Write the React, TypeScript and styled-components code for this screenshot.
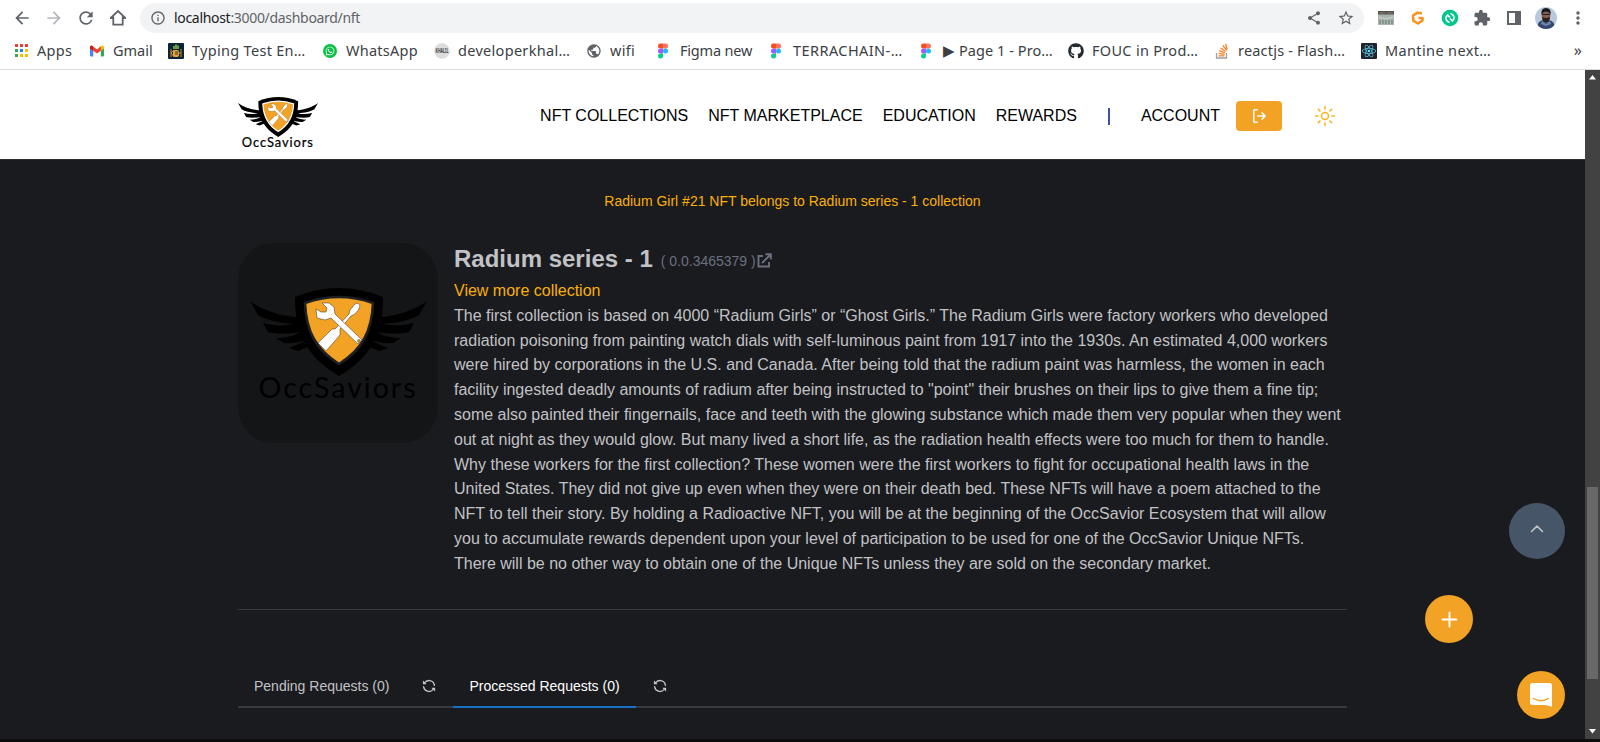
import React from "react";
import styled, { createGlobalStyle } from "styled-components";
import {
  MdArrowBack,
  MdArrowForward,
  MdRefresh,
  MdInfoOutline,
  MdShare,
  MdStarBorder,
  MdExtension,
  MdMoreVert,
  MdPublic,
} from "react-icons/md";
import { FaGithub, FaReact, FaWhatsapp } from "react-icons/fa";

const GlobalStyle = createGlobalStyle`
  * { box-sizing: border-box; }
  body {
    margin: 0;
    overflow: hidden;
    background: #0d0d0e;
    font-family: "Liberation Sans", Arial, sans-serif;
  }
  svg { display: block; flex: none; overflow: visible; }
`;

const Window = styled.div`
  display: flex;
  flex-direction: column;
  width: 1600px;
  height: 742px;
  overflow: hidden;
`;

/* ---------- browser bars ---------- */

const BrowserBars = styled.div`
  flex: none;
  height: 70px;
  background: #fff;
  border-bottom: 1px solid #dadce0;
  font-family: "Noto Sans", "Open Sans", sans-serif;
  color: #3c4043;
`;

const Toolbar = styled.div`
  display: flex;
  align-items: center;
  height: 36px;
  padding: 0 6px 0 12px;
  color: #5f6368;
`;

const NavButtons = styled.div`
  display: flex;
  gap: 12px;
  width: 128px;
`;

const AddressBar = styled.div`
  display: flex;
  align-items: center;
  width: 1224px;
  height: 30px;
  padding: 0 9px 0 10px;
  border-radius: 15px;
  background: #f1f3f4;
`;

const Address = styled.div`
  flex: 1;
  padding: 0 0 2px 8px;
  font-size: 14px;
  letter-spacing: -0.31px;
  white-space: nowrap;
  color: #5f6368;
  b { font-weight: 400; color: #202124; }
`;

const AddressActions = styled.div`
  display: flex;
  align-items: center;
  gap: 15px;
`;

const Extensions = styled.div`
  display: grid;
  flex: 1;
  grid-template-columns: repeat(7, 32px);
  align-items: center;
  justify-items: center;
  padding-left: 6px;
`;

const Bookmarks = styled.div`
  display: flex;
  align-items: center;
  height: 30px;
  padding-left: 13px;
`;

const Bookmark = styled.div<{ $width: number }>`
  display: flex;
  flex: none;
  align-items: center;
  gap: 8px;
  width: ${(p) => p.$width}px;
`;

const BookmarkLabel = styled.span<{ $spacing: number }>`
  padding-bottom: 2px;
  font-size: 14.5px;
  line-height: 20px;
  white-space: nowrap;
  letter-spacing: ${(p) => p.$spacing}px;
`;

const IconTile = styled.span<{ $bg: string; $round?: boolean }>`
  display: flex;
  flex: none;
  align-items: center;
  justify-content: center;
  width: ${(p) => (p.$round ? 14 : 16)}px;
  height: ${(p) => (p.$round ? 14 : 16)}px;
  margin: 0 ${(p) => (p.$round ? 1 : 0)}px;
  border-radius: ${(p) => (p.$round ? "50%" : "1px")};
  background: ${(p) => p.$bg};
  color: #fff;
`;

const Overflow = styled.span`
  margin-left: auto;
  padding: 0 18px 3px 0;
  font-size: 16px;
`;

/* ---------- page ---------- */

const Viewport = styled.div`
  display: flex;
  height: 669px;
`;

const Page = styled.div`
  width: 1585px;
  height: 669px;
  background: #1a1b1e;
  color: #c1c2c5;
`;

const Header = styled.header`
  height: 90px;
  padding: 0 238px;
  background: #fff;
  border-bottom: 1px solid #2c2e33;
`;

const HeaderInner = styled.div`
  display: flex;
  align-items: flex-start;
  justify-content: space-between;
  width: 1109px;
`;

const LogoLink = styled.div`
  padding-top: 27px;
`;

const Nav = styled.nav`
  display: flex;
  align-items: center;
  height: 92px;
  color: #000;
`;

const NavItem = styled.a`
  margin-right: 20px;
  font-size: 16px;
  line-height: 24px;
  white-space: nowrap;
`;

const Separator = styled.span`
  width: 2px;
  height: 17px;
  margin: 0 31px 0 11px;
  background: #3f51a0;
`;

const LogoutButton = styled.button`
  display: flex;
  align-items: center;
  justify-content: center;
  width: 46px;
  height: 30px;
  margin: 0 33px 0 -4px;
  padding: 0;
  border: 0;
  border-radius: 4px;
  background: #f2a224;
  color: #fff;
`;

const ThemeToggle = styled.span`
  padding-right: 12px;
`;

const Content = styled.main`
  width: 1109px;
  margin: 0 238px;
`;

const Notice = styled.p`
  margin: 0;
  padding-top: 30px;
  font-size: 14px;
  line-height: 22px;
  text-align: center;
  color: #fab005;
`;

const Collection = styled.section`
  display: flex;
  gap: 16px;
  height: 367px;
  margin-top: 31px;
  border-bottom: 1px solid #373a40;
`;

const Artwork = styled.div`
  flex: none;
  width: 200px;
  height: 200px;
  border-radius: 36px;
  background: #141517;
`;

const Details = styled.div`
  width: 893px;
  font-size: 16px;
  line-height: 24.8px;
`;

const TitleRow = styled.div`
  display: flex;
  align-items: center;
  height: 36px;
  padding-bottom: 4px;
`;

const Title = styled.h2`
  margin: 0 8px 0 0;
  font-size: 24px;
  line-height: 32px;
`;

const TokenId = styled.span`
  display: flex;
  align-items: center;
  gap: 1px;
  padding-top: 3px;
  font-size: 14px;
  line-height: 20px;
  color: #6b7080;
`;

const MoreLink = styled.a`
  display: block;
  color: #fab005;
`;

const Description = styled.p`
  margin: 0;
`;

const Tabs = styled.div`
  display: flex;
  height: 42px;
  margin-top: 56px;
  border-bottom: 2px solid #373a40;
`;

const Tab = styled.div<{ $active?: boolean }>`
  display: flex;
  height: 42px;
  padding: 10px 16px;
  border-bottom: 2px solid ${(p) => (p.$active ? "#1971c2" : "transparent")};
  font-size: 14px;
  line-height: 21px;
  white-space: nowrap;
  color: ${(p) => (p.$active ? "#fff" : "#c1c2c5")};
`;

const Reload = styled.span`
  width: 48px;
  padding: 13px 0 0 17px;
`;

/* ---------- floating buttons ---------- */

const FloatingButton = styled.button<{ $size: number; $x: number; $y: number; $bg?: string; $color?: string }>`
  position: absolute;
  left: ${(p) => p.$x}px;
  top: ${(p) => p.$y}px;
  display: flex;
  align-items: center;
  justify-content: center;
  width: ${(p) => p.$size}px;
  height: ${(p) => p.$size}px;
  padding: 0;
  border: 0;
  border-radius: 50%;
  background: ${(p) => p.$bg ?? "#f2a224"};
  color: ${(p) => p.$color ?? "#fff"};
`;

/* ---------- scroll bar ---------- */

const ScrollBar = styled.div`
  display: flex;
  flex-direction: column;
  align-items: center;
  justify-content: space-between;
  width: 15px;
  background: #424242;
`;

const ScrollArrow = styled.svg`
  margin: 5px 0;
`;

const ScrollThumb = styled.div`
  width: 11px;
  height: 192px;
  margin-top: 402px;
  margin-bottom: 45px;
  background: #686868;
`;

/* ---------- drawings ---------- */

const WING =
  "M12 58C24 67 42 73 58 74L75 70 80 100 72 103 60 108 51 105C58 102 64 100 68 97C62 99 52 101 46 100L38 95C46 95 56 93 62 89C50 91 38 91 30 89L25 80C36 83 46 83 56 81C42 80 28 77 20 72Z";

function Emblem({ rim, weight }: { rim: string; weight: number }) {
  return (
    <>
      <path d={WING} fill="#000" />
      <path d={WING} fill="#000" transform="translate(201 0) scale(-1 1)" />
      <path d="M57 54Q79 45 101 45Q123 45 145 54C145 91 134 113 101 133C68 113 57 91 57 54Z" fill="#000" />
      <path
        d="M67 60Q84 54 101 54Q118 54 135 60C134 88 124 107 101 121C78 107 68 88 67 60Z"
        fill="#f2a224"
        stroke={rim}
        strokeWidth="2.6"
      />
      <g fill="#fff" stroke="#3a2a10" strokeWidth="0.5">
        <path d="M117 61q3-2 5 1 0 4-5 9l-4 2-11 13 0 6-13 15q-1 2-4-2l-5-5 14-14 3 0 14-15 1-4z" />
        <path d="M78 66l1 9 8 2 6-2 27 26q2-1 4-4L97 71l-1-7-5-4-7 0 5 5-1 4-5 0z" />
        <circle cx="121" cy="98" r="1.4" fill="#f2a224" />
      </g>
      <text
        x="20.5"
        y="155"
        textLength="157"
        fontFamily="Lato, sans-serif"
        fontSize="28.5"
        fill="#000"
        stroke="#000"
        strokeWidth={weight}
      >
        OccSaviors
      </text>
    </>
  );
}

const Line = ({ size, d, w }: { size: number; d: string; w: number }) => (
  <svg
    width={size}
    height={size}
    viewBox={`0 0 ${size} ${size}`}
    fill="none"
    stroke="currentColor"
    strokeWidth={w}
    strokeLinecap="round"
    strokeLinejoin="round"
  >
    <path d={d} />
  </svg>
);

const SyncIcon = () => (
  <svg width="14" height="14" viewBox="0 0 16 16" fill="#c1c2c5">
    <path d="M1.705 8.005a.75.75 0 0 1 .834.656 5.5 5.5 0 0 0 9.592 2.97l-1.204-1.204a.25.25 0 0 1 .177-.427h3.646a.25.25 0 0 1 .25.25v3.646a.25.25 0 0 1-.427.177l-1.38-1.38A7.002 7.002 0 0 1 1.05 8.84a.75.75 0 0 1 .656-.834ZM8 2.5a5.487 5.487 0 0 0-4.131 1.869l1.204 1.204A.25.25 0 0 1 4.896 6H1.25A.25.25 0 0 1 1 5.75V2.104a.25.25 0 0 1 .427-.177l1.38 1.38A7.002 7.002 0 0 1 14.95 7.16a.75.75 0 0 1-1.49.178A5.5 5.5 0 0 0 8 2.5Z" />
  </svg>
);

const SignOutIcon = () => (
  <svg width="16" height="16" viewBox="0 0 16 16" fill="currentColor">
    <path d="M2 2.75C2 1.784 2.784 1 3.75 1h2.5a.75.75 0 0 1 0 1.5h-2.5a.25.25 0 0 0-.25.25v10.5c0 .138.112.25.25.25h2.5a.75.75 0 0 1 0 1.5h-2.5A1.75 1.75 0 0 1 2 13.25Zm10.44 4.5-1.97-1.97a.749.749 0 0 1 .326-1.275.749.749 0 0 1 .734.215l3.25 3.25a.75.75 0 0 1 0 1.06l-3.25 3.25a.749.749 0 0 1-1.275-.326.749.749 0 0 1 .215-.734l1.97-1.97H6.75a.75.75 0 0 1 0-1.5Z" />
  </svg>
);

const AppsIcon = () => (
  <svg width="16" height="16" viewBox="0 0 16 16">
    {["#ea4335", "#ea4335", "#ea4335", "#34a853", "#1a88f0", "#fbbc04", "#34a853", "#fbbc04", "#fbbc04"].map((c, i) => (
      <rect key={i} x={2 + (i % 3) * 5} y={1 + Math.floor(i / 3) * 5} width="3" height="3" fill={c} />
    ))}
  </svg>
);

const GmailIcon = () => (
  <svg width="16" height="16" viewBox="0 0 16 16">
    <path d="M1 4v8.500q0 1 1 1h2.200V6z" fill="#4285f4" />
    <path d="M15 4v8.500q0 1-1 1h-2.200V6z" fill="#34a853" />
    <path d="M1 4.200q0-2 2-1.700L8 6.400 12 3v4.500L8 10.500 1 5.500z" fill="#ea4335" />
    <path d="M11.800 3.500Q15 1.200 15 4.500v1l-3.200 2.300z" fill="#fbbc04" />
    <path d="M1 4.300q0-1.500 1.500-1.800l1.700 1.200v4L1 5.500z" fill="#c5221f" />
  </svg>
);

const FigmaIcon = () => (
  <svg width="16" height="16" viewBox="1 0 16 16">
    <path d="M8 .5H5.500a2.500 2.500 0 0 0 0 5H8z" fill="#f24e1e" />
    <path d="M8 .5h2.500a2.500 2.500 0 0 1 0 5H8z" fill="#ff7262" />
    <path d="M8 5.500H5.500a2.500 2.500 0 0 0 0 5H8z" fill="#a259ff" />
    <circle cx="10.500" cy="8" r="2.500" fill="#1abcfe" />
    <path d="M8 10.500H5.500A2.500 2.500 0 1 0 8 13z" fill="#0acf83" />
  </svg>
);

const KeysIcon = () => (
  <IconTile $bg="#0d2436">
    <svg width="16" height="16" viewBox="0 0 16 16" fill="none">
      <path d="M6 6V3M8 6V1.500M10 6V2.500" stroke="#8bc34a" strokeWidth="1.500" />
      <rect x="5" y="7" width="6" height="7" rx="2" fill="#f0a928" />
      <path d="M3 6v8M13 6v8M3 10l3-3M3 10l3 4M10 10h3" stroke="#c9952f" />
      <path d="M7 9h3M7 11h3" stroke="#183048" />
    </svg>
  </IconTile>
);

const KhalilIcon = () => (
  <svg width="16" height="16" viewBox="0 0 16 16">
    <circle cx="8" cy="8" r="7.800" fill="#dcdcdc" />
    <text x="1.500" y="10.300" textLength="13" lengthAdjust="spacingAndGlyphs" fontSize="6.500" fontWeight="700" fill="#444">
      KHALIL
    </text>
  </svg>
);

const StackIcon = () => (
  <svg width="16" height="16" viewBox="0 0 16 16" fill="none">
    <path d="M2.500 10v5h10v-5" stroke="#9aa0a6" strokeWidth="1.300" />
    <path d="M4.500 12.800h6M4.600 10.300l6 1M5.200 7.600l5.700 2.300M6.600 4.900l5 3.700M8.800 2.500l4 4.800M11.600 .8l1.500 5.500" stroke="#f48024" strokeWidth="1.300" />
  </svg>
);

const ReaderIcon = () => (
  <svg width="16" height="14" viewBox="0 1 16 14">
    <rect y="1" width="16" height="14" fill="#a9b5ae" />
    <path d="M0 1h16v3.500H0z" fill="#4d574e" />
    <path d="M1 3h6M9 3h6" stroke="#9c7567" />
    <path d="M1 7l7 2 7-2" stroke="#cfd6cb" fill="none" />
    <path d="M1 11h14M1 13h14" stroke="#667b72" strokeDasharray="2 1" />
  </svg>
);

const GIcon = () => (
  <svg width="16" height="16" viewBox="0 0 16 16" fill="none">
    <path d="M12 3.200L7.500 2.700 3.200 5.300v5.400L8 13.500l4.500-3V8H8.500" stroke="#f7931e" strokeWidth="2.600" strokeLinejoin="round" />
  </svg>
);

const RecycleIcon = () => (
  <svg width="18" height="18" viewBox="0 0 18 18" fill="none">
    <circle cx="9" cy="9" r="8.300" fill="#00c78b" />
    <path d="M8.500 13.500C4.800 12.500 3.800 8.500 6.500 6L9 8.500M9.500 4.500c3.700 1 4.700 5 2 7.500L9 9.500" stroke="#fff" strokeWidth="1.700" />
  </svg>
);

const Avatar = () => (
  <svg width="22" height="22" viewBox="0 0 22 22">
    <clipPath id="face">
      <circle cx="11" cy="11" r="11" />
    </clipPath>
    <g clipPath="url(#face)">
      <rect width="22" height="22" fill="#b8c8dd" />
      <path d="M2 22q0-8 6-9h6q6 1 6 9z" fill="#35486f" />
      <path d="M7 14l4 3 4-3 1 3-5 2-5-2z" fill="#7386ad" />
      <ellipse cx="11" cy="8.500" rx="4.300" ry="6" fill="#8a5d4d" />
      <path d="M6.500 8Q5.500 1 11 1t4.500 7q-1-3.500-4.500-3.500T6.500 8z" fill="#17171c" />
      <path d="M7 10q4 2 8 0 0 5-4 5t-4-5z" fill="#29201f" />
      <path d="M7 7.500h8" stroke="#222" />
    </g>
  </svg>
);

const BOOKMARKS: { label: string; icon: React.ReactNode; width: number; spacing: number }[] = [
  { label: "Apps", icon: <AppsIcon />, width: 76, spacing: 0.3 },
  { label: "Gmail", icon: <GmailIcon />, width: 79, spacing: 0 },
  { label: "Typing Test En…", icon: <KeysIcon />, width: 154, spacing: 0.3 },
  { label: "WhatsApp", icon: <IconTile $bg="#0bc143" $round><FaWhatsapp size={10} /></IconTile>, width: 112, spacing: 0.25 },
  { label: "developerkhal…", icon: <KhalilIcon />, width: 152, spacing: 0.3 },
  { label: "wifi", icon: <MdPublic size={16} color="#5f6368" />, width: 70, spacing: 0.25 },
  { label: "Figma new", icon: <FigmaIcon />, width: 113, spacing: -0.2 },
  { label: "TERRACHAIN-…", icon: <FigmaIcon />, width: 150, spacing: 0.43 },
  { label: "▶ Page 1 - Pro…", icon: <FigmaIcon />, width: 149, spacing: 0.07 },
  { label: "FOUC in Prod…", icon: <FaGithub size={16} color="#24292f" />, width: 146, spacing: 0.3 },
  { label: "reactjs - Flash…", icon: <StackIcon />, width: 147, spacing: 0.2 },
  { label: "Mantine next…", icon: <IconTile $bg="#20232a"><FaReact size={14} color="#61dafb" /></IconTile>, width: 140, spacing: 0.37 },
];

export default function App() {
  return (
    <Window>
      <GlobalStyle />
      <BrowserBars>
        <Toolbar>
          <NavButtons>
            <MdArrowBack size={20} />
            <MdArrowForward size={20} color="#b4b7ba" />
            <MdRefresh size={20} />
            <svg width="20" height="20" viewBox="0 0 20 20" fill="none" stroke="currentColor" strokeWidth="1.800">
              <path d="M2.500 10.200L10 3l7.500 7.200M5.300 8.500v8.200h9.400V8.500M2 10.200h3.500M14.500 10.200H18" />
            </svg>
          </NavButtons>
          <AddressBar>
            <MdInfoOutline size={16} />
            <Address>
              <b>localhost</b>:3000/dashboard/nft
            </Address>
            <AddressActions>
              <MdShare size={16} />
              <MdStarBorder size={18} />
            </AddressActions>
          </AddressBar>
          <Extensions>
            <ReaderIcon />
            <GIcon />
            <RecycleIcon />
            <MdExtension size={18} />
            <svg width="16" height="16" viewBox="0 0 16 16">
              <path d="M1 1h14v14H1zM3 3v10h6V3z" fill="currentColor" fillRule="evenodd" />
            </svg>
            <Avatar />
            <MdMoreVert size={20} />
          </Extensions>
        </Toolbar>
        <Bookmarks>
          {BOOKMARKS.map((b) => (
            <Bookmark key={b.label} $width={b.width}>
              {b.icon}
              <BookmarkLabel $spacing={b.spacing}>{b.label}</BookmarkLabel>
            </Bookmark>
          ))}
          <Overflow>»</Overflow>
        </Bookmarks>
      </BrowserBars>

      <Viewport>
        <Page>
          <Header>
            <HeaderInner>
              <LogoLink>
                <svg width="80" height="54" viewBox="12 45 177 119">
                  <Emblem rim="#fff" weight={0.5} />
                </svg>
              </LogoLink>
              <Nav>
                <NavItem>NFT COLLECTIONS</NavItem>
                <NavItem>NFT MARKETPLACE</NavItem>
                <NavItem>EDUCATION</NavItem>
                <NavItem>REWARDS</NavItem>
                <Separator />
                <NavItem>ACCOUNT</NavItem>
                <LogoutButton aria-label="Log out">
                  <SignOutIcon />
                </LogoutButton>
                <ThemeToggle>
                  <svg width="20" height="20" viewBox="0 0 20 20" fill="none" stroke="#fab41e" strokeWidth="1.500">
                    <circle cx="10" cy="10" r="3.500" />
                    <path d="M10 0v3.500M10 16.500V20M0 10h3.500M16.500 10H20M2.900 2.900l2.600 2.600M14.500 14.500l2.600 2.600M2.900 17.100l2.600-2.600M14.500 5.500l2.600-2.600" />
                  </svg>
                </ThemeToggle>
              </Nav>
            </HeaderInner>
          </Header>

          <Content>
            <Notice>Radium Girl #21 NFT belongs to Radium series - 1 collection</Notice>
            <Collection>
              <Artwork>
                <svg width="200" height="200" viewBox="0 0 200 200">
                  <Emblem rim="#1f2022" weight={0} />
                </svg>
              </Artwork>
              <Details>
                <TitleRow>
                  <Title>Radium series - 1</Title>
                  <TokenId>
                    ( 0.0.3465379 )
                    <svg width="15" height="15" viewBox="0 0 15 15" fill="none" stroke="currentColor" strokeWidth="1.900">
                      <path d="M6 3H1.500v10.500H12V9M8.500 1.200h5.300v5.300M13.500 1.500L5 10" />
                    </svg>
                  </TokenId>
                </TitleRow>
                <MoreLink>View more collection</MoreLink>
                <Description>
                  The first collection is based on 4000 “Radium Girls” or “Ghost Girls.” The Radium Girls were factory
                  workers who developed radiation poisoning from painting watch dials with self-luminous paint from 1917
                  into the 1930s. An estimated 4,000 workers were hired by corporations in the U.S. and Canada. After
                  being told that the radium paint was harmless, the women in each facility ingested deadly amounts of
                  radium after being instructed to "point" their brushes on their lips to give them a fine tip; some
                  also painted their fingernails, face and teeth with the glowing substance which made them very popular
                  when they went out at night as they would glow. But many lived a short life, as the radiation health
                  effects were too much for them to handle. Why these workers for the first collection? These women were
                  the first workers to fight for occupational health laws in the United States. They did not give up
                  even when they were on their death bed. These NFTs will have a poem attached to the NFT to tell their
                  story. By holding a Radioactive NFT, you will be at the beginning of the OccSavior Ecosystem that will
                  allow you to accumulate rewards dependent upon your level of participation to be used for one of the
                  OccSavior Unique NFTs. There will be no other way to obtain one of the Unique NFTs unless they are
                  sold on the secondary market.
                </Description>
              </Details>
            </Collection>
            <Tabs>
              <Tab>Pending Requests (0)</Tab>
              <Reload>
                <SyncIcon />
              </Reload>
              <Tab $active>Processed Requests (0)</Tab>
              <Reload>
                <SyncIcon />
              </Reload>
            </Tabs>
          </Content>
        </Page>
        <ScrollBar>
          <ScrollArrow width="7" height="5" viewBox="0 0 7 5">
            <path d="M3.500 0L7 4.500H0z" fill="#fff" />
          </ScrollArrow>
          <ScrollThumb />
          <ScrollArrow width="7" height="5" viewBox="0 0 7 5">
            <path d="M3.500 4.500L7 0H0z" fill="#fff" />
          </ScrollArrow>
        </ScrollBar>
      </Viewport>

      <FloatingButton $size={56} $x={1509} $y={503} $bg="#475569" $color="#c1c2c5" aria-label="Back to top">
        <Line size={16} w={1.600} d="M2.500 8.500L8 3.200 13.500 8.500" />
      </FloatingButton>
      <FloatingButton $size={48} $x={1425} $y={595} aria-label="Add">
        <Line size={18} w={1.900} d="M9.500 2.500v14M2.500 9.500h14" />
      </FloatingButton>
      <FloatingButton $size={48} $x={1517} $y={671} aria-label="Open chat">
        <svg width="22" height="24" viewBox="0 0 22 24">
          <path d="M2.500 0h17Q22 0 22 2.500V24l-6-2H2.500Q0 22 0 19.500v-17Q0 0 2.500 0z" fill="#fff" />
          <path d="M3.500 15.500q7.500 4.500 15 0" fill="none" stroke="#f2a224" strokeWidth="1.400" strokeLinecap="round" />
        </svg>
      </FloatingButton>
    </Window>
  );
}
